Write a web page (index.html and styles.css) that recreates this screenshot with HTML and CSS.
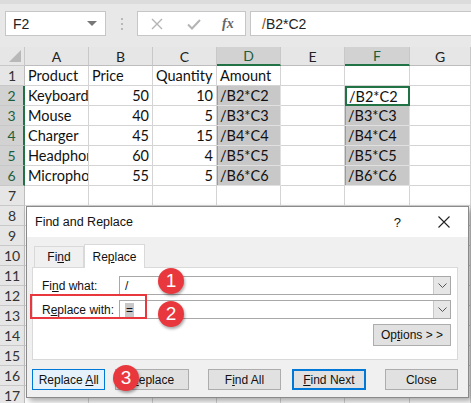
FILE: index.html
```html
<!DOCTYPE html>
<html>
<head>
<meta charset="utf-8">
<link rel="stylesheet" href="styles.css">
</head>
<body>
<div class="topbar">
  <div class="namebox"><span>F2</span><span class="caret"></span></div>
  <div class="dots"><i></i><i></i><i></i></div>
  <div class="iconbox">
    <svg class="ic" width="14" height="14" viewBox="0 0 14 14"><path d="M2 2L12 12M12 2L2 12" stroke="#b4b4b4" stroke-width="1.4" fill="none"/></svg>
    <svg class="ic" width="16" height="14" viewBox="0 0 16 14"><path d="M2 7.5L6 11.5L14 3" stroke="#b4b4b4" stroke-width="2" fill="none"/></svg>
    <span class="fx">fx</span>
  </div>
  <div class="formula"><span class="slash">/</span>B2*C2</div>
</div>

<div class="sheet">
  <div class="corner"><span class="tri"></span></div>
  <div class="ch">A</div><div class="ch">B</div><div class="ch">C</div><div class="ch sel">D</div><div class="ch">E</div><div class="ch sel">F</div><div class="ch">G</div>

  <div class="rh">1</div>
  <div class="c">Product</div><div class="c">Price</div><div class="c">Quantity</div><div class="c">Amount</div><div class="c"></div><div class="c"></div><div class="c"></div>

  <div class="rh sel">2</div>
  <div class="c">Keyboard</div><div class="c n">50</div><div class="c n">10</div><div class="c g">/B2*C2</div><div class="c"></div><div class="c act">/B2*C2</div><div class="c"></div>

  <div class="rh sel">3</div>
  <div class="c">Mouse</div><div class="c n">40</div><div class="c n">5</div><div class="c g">/B3*C3</div><div class="c"></div><div class="c g">/B3*C3</div><div class="c"></div>

  <div class="rh sel">4</div>
  <div class="c">Charger</div><div class="c n">45</div><div class="c n">15</div><div class="c g">/B4*C4</div><div class="c"></div><div class="c g">/B4*C4</div><div class="c"></div>

  <div class="rh sel">5</div>
  <div class="c">Headphones</div><div class="c n">60</div><div class="c n">4</div><div class="c g">/B5*C5</div><div class="c"></div><div class="c g">/B5*C5</div><div class="c"></div>

  <div class="rh sel">6</div>
  <div class="c">Microphones</div><div class="c n">55</div><div class="c n">5</div><div class="c g">/B6*C6</div><div class="c"></div><div class="c g">/B6*C6</div><div class="c"></div>

  <div class="rh">7</div><div class="c"></div><div class="c"></div><div class="c"></div><div class="c"></div><div class="c"></div><div class="c"></div><div class="c"></div>
  <div class="rh">8</div><div class="c"></div><div class="c"></div><div class="c"></div><div class="c"></div><div class="c"></div><div class="c"></div><div class="c"></div>
  <div class="rh">9</div><div class="c"></div><div class="c"></div><div class="c"></div><div class="c"></div><div class="c"></div><div class="c"></div><div class="c"></div>
  <div class="rh">10</div><div class="c"></div><div class="c"></div><div class="c"></div><div class="c"></div><div class="c"></div><div class="c"></div><div class="c"></div>
  <div class="rh">11</div><div class="c"></div><div class="c"></div><div class="c"></div><div class="c"></div><div class="c"></div><div class="c"></div><div class="c"></div>
  <div class="rh">12</div><div class="c"></div><div class="c"></div><div class="c"></div><div class="c"></div><div class="c"></div><div class="c"></div><div class="c"></div>
  <div class="rh">13</div><div class="c"></div><div class="c"></div><div class="c"></div><div class="c"></div><div class="c"></div><div class="c"></div><div class="c"></div>
  <div class="rh">14</div><div class="c"></div><div class="c"></div><div class="c"></div><div class="c"></div><div class="c"></div><div class="c"></div><div class="c"></div>
  <div class="rh">15</div><div class="c"></div><div class="c"></div><div class="c"></div><div class="c"></div><div class="c"></div><div class="c"></div><div class="c"></div>
  <div class="rh">16</div><div class="c"></div><div class="c"></div><div class="c"></div><div class="c"></div><div class="c"></div><div class="c"></div><div class="c"></div>
  <div class="rh">17</div><div class="c"></div><div class="c"></div><div class="c"></div><div class="c"></div><div class="c"></div><div class="c"></div><div class="c"></div>

  <div class="dialog">
    <div class="dtitle">
      <span class="dname">Find and Replace</span>
      <span class="help">?</span>
      <svg class="close" width="12" height="12" viewBox="0 0 12 12"><path d="M0.5 0.5L11.5 11.5M11.5 0.5L0.5 11.5" stroke="#222" stroke-width="1.1" fill="none"/></svg>
    </div>
    <div class="dbody">
      <div class="tabs">
        <div class="tab">Fi<u>n</u>d</div>
        <div class="tab on">Re<u>p</u>lace</div>
      </div>
      <div class="panel">
        <div class="frow">
          <span class="lbl">Fi<u>n</u>d what:</span>
          <div class="combo"><span class="val">/</span><span class="dd"><svg width="9" height="5" viewBox="0 0 9 5"><path d="M0.5 0.5L4.5 4.5L8.5 0.5" stroke="#555" fill="none"/></svg></span></div>
        </div>
        <div class="frow">
          <span class="lbl">R<u>e</u>place with:</span>
          <div class="combo"><span class="val"><span class="hl">=</span></span><span class="dd"><svg width="9" height="5" viewBox="0 0 9 5"><path d="M0.5 0.5L4.5 4.5L8.5 0.5" stroke="#555" fill="none"/></svg></span></div>
        </div>
        <div class="optrow"><button class="btn opt">Op<u>t</u>ions &gt; &gt;</button></div>
      </div>
      <div class="btnrow">
        <button class="btn focus">Replace <u>A</u>ll</button>
        <button class="btn b-rep"><u>R</u>eplace</button>
        <button class="btn b-fa">F<u>i</u>nd All</button>
        <button class="btn def"><u>F</u>ind Next</button>
        <button class="btn b-cl">Close</button>
      </div>
    </div>
    <div class="redbox"></div>
    <div class="badge b1">1</div>
    <div class="badge b2">2</div>
    <div class="badge b3">3</div>
  </div>
</div>
</body>
</html>
```

FILE: styles.css
```css
* { box-sizing: border-box; }
html, body { margin: 0; padding: 0; }
body {
  width: 471px;
  height: 403px;
  overflow: hidden;
  background: #fff;
  font-family: Lato, "Liberation Sans", sans-serif;
}
.topbar {
  height: 47px;
  background: #e8e8e8;
  border-top: 4px solid #dcdcdc;
  display: flex;
  align-items: flex-start;
  padding-top: 7px;
  padding-left: 5px;
  font-family: "Liberation Sans", sans-serif;
}
.namebox {
  width: 101px;
  height: 25px;
  background: #fff;
  border: 1px solid #c6c6c6;
  display: flex;
  align-items: center;
  justify-content: space-between;
  padding: 0 8px 0 7px;
  font-size: 14px;
  color: #222;
}
.caret {
  width: 0; height: 0;
  border-left: 5px solid transparent;
  border-right: 5px solid transparent;
  border-top: 5px solid #777;
}
.dots {
  width: 31px;
  height: 25px;
  display: flex;
  flex-direction: column;
  align-items: center;
  justify-content: center;
  gap: 3px;
}
.dots i { width: 2px; height: 2px; background: #b8b8b8; display: block; }
.iconbox {
  width: 109px;
  height: 25px;
  background: #fff;
  border: 1px solid #c6c6c6;
  display: flex;
  align-items: center;
  padding-left: 12px;
  gap: 22px;
}
.fx {
  font-family: "Liberation Serif", serif;
  font-style: italic;
  font-weight: bold;
  font-size: 14px;
  color: #666;
  margin-left: -2px;
}
.formula {
  margin-left: 4px;
  flex: 1;
  height: 25px;
  background: #fff;
  border: 1px solid #c6c6c6;
  border-right: none;
  display: flex;
  align-items: center;
  padding-left: 11px;
  font-size: 14px;
  color: #222;
}
.slash { color: #8a4b12; }

.sheet {
  position: relative;
  display: grid;
  grid-template-columns: 25px 64px 64px 64px 64px 64px 65px 61px;
  grid-template-rows: 19px repeat(17, 20px);
  font-size: 14.5px;
  color: #111;
}
.corner {
  background: #e6e6e6;
  border-right: 1px solid #c8c8c8;
  border-bottom: 1px solid #c8c8c8;
  position: relative;
}
.tri {
  position: absolute;
  right: 3px; bottom: 3px;
  width: 0; height: 0;
  border-left: 12px solid transparent;
  border-bottom: 12px solid #b8b8b8;
}
.ch {
  background: #e6e6e6;
  border-right: 1px solid #c8c8c8;
  border-bottom: 1px solid #bdbdbd;
  display: flex;
  align-items: center;
  justify-content: center;
  font-size: 14px;
  color: #222;
}
.ch.sel {
  background: #d2d2d2;
  border-bottom: 2px solid #217346;
  color: #1c5e3a;
}
.rh {
  background: #e6e6e6;
  border-right: 1px solid #bdbdbd;
  border-bottom: 1px solid #c8c8c8;
  display: flex;
  align-items: center;
  justify-content: center;
  font-size: 14px;
  color: #333;
}
.rh.sel {
  background: #d2d2d2;
  border-right: 2px solid #217346;
  color: #1c5e3a;
}
.c {
  border-right: 1px solid #d4d4d4;
  border-bottom: 1px solid #d4d4d4;
  padding: 0 3px 0 3px;
  display: flex;
  align-items: center;
  white-space: nowrap;
  overflow: hidden;
}
.c.n { justify-content: flex-end; }
.c.g {
  background: #c8c8c8;
  border-right: 1px solid #e0e0e0;
  border-bottom: 1px solid #e0e0e0;
  box-shadow: inset 1px 0 0 #9c9c9c;
}
.c.act {
  border: 2px solid #217346;
  padding-left: 2px;
  box-shadow: none;
}

.dialog {
  position: absolute;
  left: 26px;
  top: 159px;
  width: 443px;
  height: 192px;
  border: 1px solid #8a8a8a;
  background: #f0f0f0;
  box-shadow: 3px 3px 6px rgba(0,0,0,0.35);
  font-family: "Liberation Sans", sans-serif;
  font-size: 12px;
  color: #111;
}
.dtitle {
  height: 30px;
  background: #fff;
  display: flex;
  align-items: center;
  padding-left: 8px;
  font-size: 12.5px;
}
.dname { flex: 1; }
.help { margin-right: 37px; font-size: 13px; }
.close { margin-right: 18px; }
.dbody { padding: 7px 10px 0 5px; }
.tabs { display: flex; align-items: flex-end; height: 23px; padding-left: 2px; }
.tab {
  height: 21px;
  width: 50px;
  border: 1px solid #d9d9d9;
  border-bottom: none;
  display: flex;
  align-items: center;
  justify-content: center;
  background: #f0f0f0;
}
.tab.on {
  height: 24px;
  width: 61px;
  background: #fff;
  margin-bottom: -1px;
  position: relative;
  z-index: 1;
}
.panel {
  background: #fff;
  border: 1px solid #d9d9d9;
  height: 93px;
  padding: 8px 0 0 8px;
}
.frow { display: flex; align-items: center; height: 19px; margin-bottom: 5px; }
.lbl { width: 78px; padding-left: 1px; }
.combo {
  width: 332px;
  height: 19px;
  border: 1px solid #a8a8a8;
  display: flex;
  align-items: center;
  background: #fff;
}
.val { flex: 1; padding-left: 5px; }
.hl { background: #c8c8c8; padding: 0 1px; }
.dd {
  width: 17px;
  height: 17px;
  background: #e6e6e6;
  border-left: 1px solid #c8c8c8;
  display: flex;
  align-items: center;
  justify-content: center;
}
.optrow { display: flex; justify-content: flex-end; padding-right: 6px; margin-top: 5px; }
.btn {
  font-family: "Liberation Sans", sans-serif;
  font-size: 12px;
  color: #111;
  background: #e1e1e1;
  border: 1px solid #adadad;
  height: 21px;
  width: 74px;
  padding: 0;
  margin: 0;
}
.btn.opt { width: 78px; height: 22px; }
.btnrow { display: flex; align-items: center; margin-top: 9px; }
.btn.focus { background: #e5f1fb; border-color: #0078d7; }
.b-rep { margin-left: 10px; }
.b-fa { margin-left: 19px; }
.btn.def { border: 2px solid #0078d7; margin-left: 11px; }
.b-cl { margin-left: 19px; }

.redbox {
  position: absolute;
  left: 3px;
  top: 87px;
  width: 117px;
  height: 25px;
  border: 2px solid #e8383d;
}
.badge {
  position: absolute;
  width: 26px;
  height: 26px;
  border-radius: 50%;
  background: #e8383d;
  color: #fff;
  font-family: "Liberation Sans", sans-serif;
  font-size: 19px;
  display: flex;
  align-items: center;
  justify-content: center;
  box-shadow: 1px 2px 3px rgba(0,0,0,0.35);
}
.b1 { left: 131px; top: 61px; }
.b2 { left: 131px; top: 94px; }
.b3 { left: 86px; top: 158px; }
```
